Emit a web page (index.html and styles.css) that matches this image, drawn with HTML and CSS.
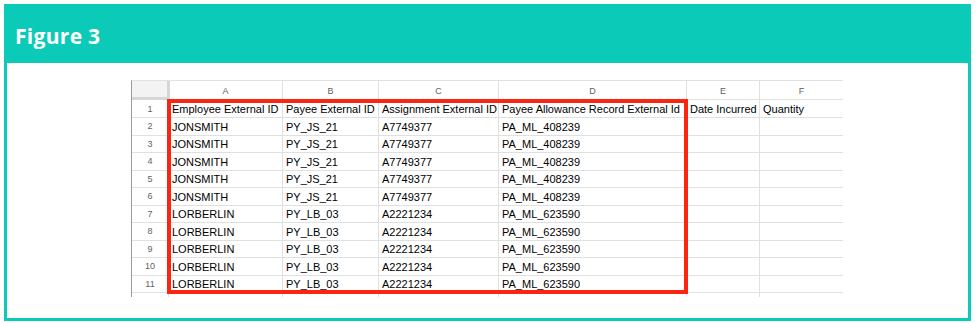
FILE: index.html
```html
<!DOCTYPE html>
<html lang="en">
<head>
<meta charset="utf-8">
<title>Figure 3</title>
<link rel="stylesheet" href="styles.css">
</head>
<body>
<div class="frame">
  <div class="frame-head"><h1 class="title">Figure 3</h1></div>
  <div class="frame-body">
    <div class="sheet">
      <div class="grid">
        <div class="corner"></div>
        <div class="colh">A</div><div class="colh">B</div><div class="colh">C</div><div class="colh">D</div><div class="colh">E</div><div class="colh">F</div>

        <div class="rowh r1">1</div><div class="cell r1">Employee External ID</div><div class="cell r1">Payee External ID</div><div class="cell r1">Assignment External ID</div><div class="cell r1">Payee Allowance Record External Id</div><div class="cell r1">Date Incurred</div><div class="cell r1">Quantity</div>

        <div class="rowh">2</div><div class="cell">JONSMITH</div><div class="cell">PY_JS_21</div><div class="cell">A7749377</div><div class="cell">PA_ML_408239</div><div class="cell"></div><div class="cell"></div>
        <div class="rowh">3</div><div class="cell">JONSMITH</div><div class="cell">PY_JS_21</div><div class="cell">A7749377</div><div class="cell">PA_ML_408239</div><div class="cell"></div><div class="cell"></div>
        <div class="rowh">4</div><div class="cell">JONSMITH</div><div class="cell">PY_JS_21</div><div class="cell">A7749377</div><div class="cell">PA_ML_408239</div><div class="cell"></div><div class="cell"></div>
        <div class="rowh">5</div><div class="cell">JONSMITH</div><div class="cell">PY_JS_21</div><div class="cell">A7749377</div><div class="cell">PA_ML_408239</div><div class="cell"></div><div class="cell"></div>
        <div class="rowh">6</div><div class="cell">JONSMITH</div><div class="cell">PY_JS_21</div><div class="cell">A7749377</div><div class="cell">PA_ML_408239</div><div class="cell"></div><div class="cell"></div>
        <div class="rowh">7</div><div class="cell">LORBERLIN</div><div class="cell">PY_LB_03</div><div class="cell">A2221234</div><div class="cell">PA_ML_623590</div><div class="cell"></div><div class="cell"></div>
        <div class="rowh">8</div><div class="cell">LORBERLIN</div><div class="cell">PY_LB_03</div><div class="cell">A2221234</div><div class="cell">PA_ML_623590</div><div class="cell"></div><div class="cell"></div>
        <div class="rowh">9</div><div class="cell">LORBERLIN</div><div class="cell">PY_LB_03</div><div class="cell">A2221234</div><div class="cell">PA_ML_623590</div><div class="cell"></div><div class="cell"></div>
        <div class="rowh">10</div><div class="cell">LORBERLIN</div><div class="cell">PY_LB_03</div><div class="cell">A2221234</div><div class="cell">PA_ML_623590</div><div class="cell"></div><div class="cell"></div>
        <div class="rowh">11</div><div class="cell">LORBERLIN</div><div class="cell">PY_LB_03</div><div class="cell">A2221234</div><div class="cell">PA_ML_623590</div><div class="cell"></div><div class="cell"></div>

        <div class="rowh stub"></div><div class="cell stub"></div><div class="cell stub"></div><div class="cell stub"></div><div class="cell stub"></div><div class="cell stub"></div><div class="cell stub"></div>
      </div>
      <div class="highlight"></div>
    </div>
  </div>
</div>
</body>
</html>
```

FILE: styles.css
```css
* { box-sizing: border-box; }

html, body {
  margin: 0;
  padding: 0;
  background: #ffffff;
}

.frame {
  margin: 4px 0 0 4px;
  width: 967px;
  height: 317px;
  border: 3px solid #0bcbb8;
  display: flex;
  flex-direction: column;
  background: #ffffff;
}

.frame-head {
  height: 56px;
  flex: none;
  background: #0bcbb8;
  display: flex;
  align-items: center;
  padding-left: 8px;
}

.title {
  margin: 0;
  font-family: "Open Sans", "Noto Sans", sans-serif;
  font-weight: 700;
  font-size: 21px;
  color: #ffffff;
  letter-spacing: 0.3px;
  line-height: 1;
  padding-top: 2px;
}

.frame-body {
  flex: 1;
  padding: 17px 0 0 124px;
  overflow: hidden;
}

.sheet {
  position: relative;
  width: 712px;
  height: 217px;
  overflow: hidden;
  border-top: 1px solid #e1e1e1;
  border-left: 1px solid #9a9a9a;
}

.grid {
  display: grid;
  grid-template-columns: 37px 114px 96px 120px 188px 73px 83px;
  grid-template-rows: 19px 18px repeat(10, 17.5px) 6px;
  font-family: "Liberation Sans", Arial, sans-serif;
}

.grid > div {
  border-right: 1px solid #e0e0e0;
  border-bottom: 1px solid #e0e0e0;
  display: flex;
  align-items: center;
  overflow: hidden;
  white-space: nowrap;
}

.grid > div:nth-child(7n) {
  border-right: none;
}

.grid > .corner {
  background: #f3f3f3;
  border-right: 3px solid #d6d6d6;
  border-bottom: 3px solid #d6d6d6;
  margin-right: -1px;
}

.colh {
  justify-content: center;
  font-size: 9px;
  color: #5f5f5f;
  padding-top: 1px;
}

.rowh {
  justify-content: center;
  font-size: 9px;
  color: #5f5f5f;
}

.cell {
  font-size: 11px;
  color: #000000;
  padding-left: 3px;
  padding-top: 1px;
}

.grid > .stub {
  border-bottom: none;
}

.highlight {
  position: absolute;
  left: 35px;
  top: 18px;
  width: 521px;
  height: 195px;
  border: 4px solid #fb2512;
  pointer-events: none;
}
```
